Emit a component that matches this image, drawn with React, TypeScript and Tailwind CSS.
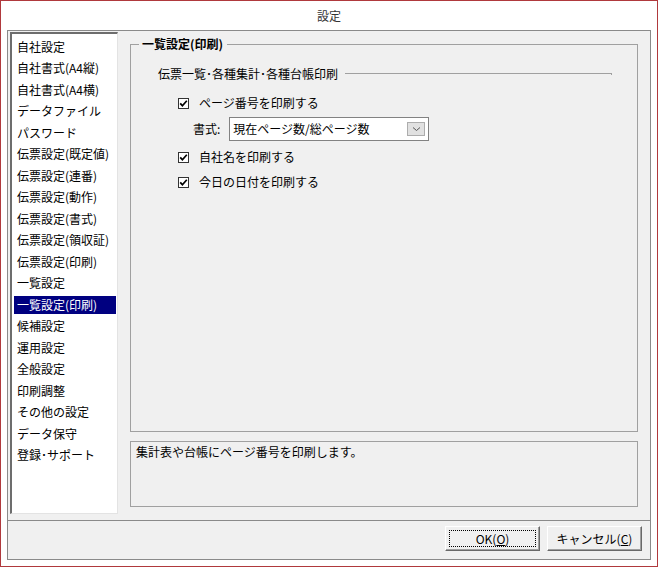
import { FC } from 'react';

const menuItems = [
  '自社設定',
  '自社書式(A4縦)',
  '自社書式(A4横)',
  'データファイル',
  'パスワード',
  '伝票設定(既定値)',
  '伝票設定(連番)',
  '伝票設定(動作)',
  '伝票設定(書式)',
  '伝票設定(領収証)',
  '伝票設定(印刷)',
  '一覧設定',
  '一覧設定(印刷)',
  '候補設定',
  '運用設定',
  '全般設定',
  '印刷調整',
  'その他の設定',
  'データ保守',
  '登録･サポート',
];

const SELECTED = 12;

const CheckBox: FC<{ label: string }> = ({ label }) => (
  <div className="flex items-center h-[16px]">
    <span className="w-[11px] h-[11px] border border-[#333333] bg-white flex items-center justify-center">
      <svg width="9" height="9" viewBox="0 0 9 9">
        <path d="M1.2 4.4 L3.4 6.7 L7.8 1.8" fill="none" stroke="#000" strokeWidth="1.7" />
      </svg>
    </span>
    <span className="ml-[10px]">{label}</span>
  </div>
);

const DialogButton: FC<{ label: string; mnemonic: string; focused?: boolean }> = ({
  label,
  mnemonic,
  focused,
}) => (
  <button className="w-[95px] h-[25px] bg-[#f0f0f0] border border-t-white border-l-white border-r-[#696969] border-b-[#696969] shadow-[inset_-1px_-1px_0_#a0a0a0] p-[3px]">
    <div
      className={`h-full flex items-center justify-center border border-dotted ${
        focused ? 'border-black' : 'border-transparent'
      }`}
    >
      {label}(<span className="underline">{mnemonic}</span>)
    </div>
  </button>
);

const App: FC = () => {
  return (
    <div className="w-[658px] h-[567px] border border-[#b0393d] bg-white flex flex-col font-['Noto_Sans_CJK_JP',sans-serif] text-[12px] leading-[16px] text-black">
      {/* title bar */}
      <div className="h-[29px] flex items-center justify-center text-[#333333]">設定</div>

      {/* dialog frame */}
      <div className="mx-[6px] h-[530px] border border-[#8a8a8a] bg-[#f0f0f0] flex flex-col">
        <div className="h-[489px] flex pl-[2px] pt-[1px]">
          {/* left menu */}
          <div className="w-[108px] h-[482px] bg-white border-l-2 border-t-2 border-l-[#6d6d6d] border-t-[#6d6d6d] border-r border-b border-r-[#e3e3e3] border-b-[#e3e3e3] pt-[2px]">
            {menuItems.map((item, i) => (
              <div key={item} className="h-[21.5px] flex items-center">
                <div
                  className={`h-[18px] flex-1 ml-[2px] mr-[1px] pl-[3px] flex items-center whitespace-nowrap ${
                    i === SELECTED ? 'bg-[#000080] text-white' : ''
                  }`}
                >
                  {item}
                </div>
              </div>
            ))}
          </div>

          {/* right side */}
          <div className="ml-[12px] w-[508px] pt-[4px] flex flex-col">
            <fieldset className="h-[396px] border border-[#a0a0a0] m-0 p-0">
              <legend className="ml-[8px] pl-[3px] pr-[4px] font-bold leading-[16px]">一覧設定(印刷)</legend>
              <div className="mt-[14px] pl-[27px] pr-[25px] flex items-center h-[16px]">
                <span>伝票一覧･各種集計･各種台帳印刷</span>
                <div className="flex-1 ml-[7px] h-[2px] border-t border-r border-[#a0a0a0]" />
              </div>

              <div className="pl-[47px] mt-[13px]">
                <CheckBox label="ページ番号を印刷する" />
                <div className="flex items-center mt-[6px] pl-[15px]">
                  <span>書式:</span>
                  <div className="ml-[9px] w-[200px] h-[24px] border border-[#828282] bg-white flex items-center pl-[3px] pr-[3px]">
                    <span className="flex-1">現在ページ数/総ページ数</span>
                    <span className="w-[18px] h-[14px] bg-[#e1e1e1] border border-[#adadad] flex items-center justify-center">
                      <svg width="9" height="6" viewBox="0 0 9 6">
                        <path d="M1 1.5 L4.5 4.5 L8 1.5" fill="none" stroke="#555" strokeWidth="1" />
                      </svg>
                    </span>
                  </div>
                </div>
                <div className="mt-[8px]">
                  <CheckBox label="自社名を印刷する" />
                </div>
                <div className="mt-[9px]">
                  <CheckBox label="今日の日付を印刷する" />
                </div>
              </div>
            </fieldset>

            <div className="mt-[9px] h-[66px] border border-[#a0a0a0] pl-[5px] pt-[2px]">
              集計表や台帳にページ番号を印刷します。
            </div>
          </div>
        </div>

        {/* buttons */}
        <div className="flex-1 border-t border-[#8a8a8a] flex justify-end items-start pt-[5px] pr-[8px] gap-[7px]">
          <DialogButton label="OK" mnemonic="O" focused />
          <DialogButton label="キャンセル" mnemonic="C" />
        </div>
      </div>
    </div>
  );
};

export default App;
